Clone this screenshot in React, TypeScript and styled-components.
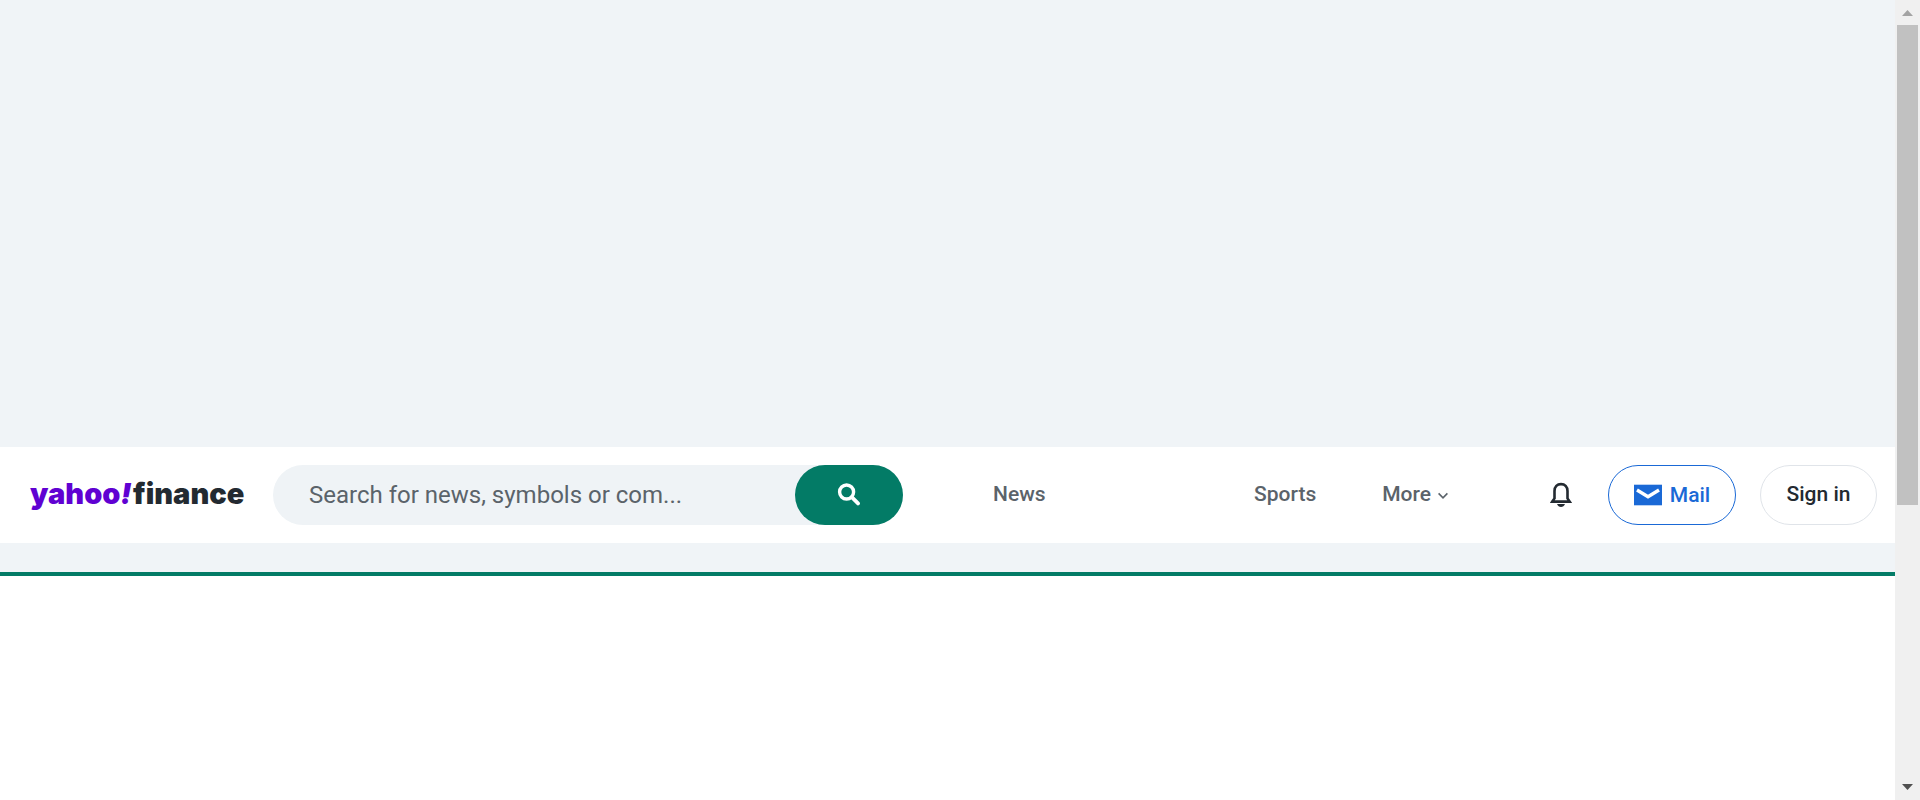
import React from 'react';
import styled, { createGlobalStyle } from 'styled-components';

const GlobalStyle = createGlobalStyle`
  *, *::before, *::after { box-sizing: border-box; }
  body {
    margin: 0;
    background: #fff;
    color: #232a31;
    font-family: Roboto, "Liberation Sans", sans-serif;
  }
`;

const Shell = styled.div`
  display: flex;
  height: 100vh;
`;

const Page = styled.div`
  flex: 1;
  min-width: 0;
  overflow: hidden;
`;

const AdBanner = styled.aside`
  height: 447px;
  background: #f0f4f7;
`;

const Header = styled.header`
  display: flex;
  align-items: center;
  height: 96px;
  padding: 0 18px 0 30px;
  background: #fff;
`;

const Logo = styled.a`
  display: flex;
  flex: 0 0 243px;
  padding-bottom: 2px;
  font: 900 29px/40px Inter, "Noto Sans", sans-serif;
  color: #232a31;
  text-decoration: none;
`;

const LogoBrand = styled.span`
  flex: 0 0 103px;
  color: #6001d2;
`;

const SearchForm = styled.form`
  display: flex;
  flex: 0 1 630px;
  height: 60px;
  border-radius: 30px;
  background: #eff3f6;
`;

const SearchInput = styled.input`
  flex: 1;
  min-width: 0;
  padding: 0 0 0 36px;
  border: 0;
  outline: 0;
  background: transparent;
  font: 400 24px/30px Roboto, sans-serif;
  color: #232a31;

  &::placeholder {
    color: #5b636a;
    opacity: 1;
  }
`;

const SearchButton = styled.button`
  display: flex;
  align-items: center;
  justify-content: center;
  flex: 0 0 108px;
  padding: 0 0 2px;
  border: 0;
  border-radius: 30px;
  background: #037b66;
`;

const Nav = styled.nav`
  display: flex;
  flex: 1;
  align-items: center;
  justify-content: space-between;
  margin: 0 102px 0 90px;
  padding-bottom: 2px;
`;

const NavGroup = styled.div`
  display: flex;
  align-items: center;
  gap: 66px;
`;

const NavLink = styled.a`
  font: 500 21px/30px Roboto, sans-serif;
  color: #5b636a;
  text-decoration: none;
`;

const MoreButton = styled.button`
  display: flex;
  align-items: center;
  gap: 7px;
  padding: 0;
  border: 0;
  background: none;
  font: 500 21px/30px Roboto, sans-serif;
  color: #5b636a;
`;

const BellButton = styled.button`
  display: flex;
  margin-right: 36px;
  padding: 0;
  border: 0;
  background: none;
`;

const PillLink = styled.a<{ $tone: string; $border: string; $width: number }>`
  display: flex;
  align-items: center;
  justify-content: center;
  gap: 8px;
  flex: 0 0 ${(p) => p.$width}px;
  height: 60px;
  border: 1px solid ${(p) => p.$border};
  border-radius: 30px;
  font: 500 21px/30px Roboto, sans-serif;
  color: ${(p) => p.$tone};
  text-decoration: none;

  & + & {
    margin-left: 24px;
    padding-bottom: 2px;
  }
`;

const SubBar = styled.div`
  height: 33px;
  border-bottom: 4px solid #037b66;
  background: #f0f4f7;
`;

const Scrollbar = styled.div`
  display: flex;
  flex: 0 0 25px;
  flex-direction: column;
  align-items: center;
  background: #f0f0f0;
`;

const ScrollArrow = styled.svg`
  flex: 0 0 25px;
  width: 25px;
  height: 25px;
`;

const ScrollTrack = styled.div`
  flex: 1;
  width: 21px;
`;

const ScrollThumb = styled.div`
  height: 64%;
  background: #c1c1c1;
`;

export default function App() {
  return (
    <>
      <GlobalStyle />
      <Shell>
        <Page>
          <AdBanner />
          <Header>
            <Logo href="#">
              <LogoBrand>
                yahoo<i>!</i>
              </LogoBrand>
              finance
            </Logo>
            <SearchForm role="search">
              <SearchInput
                type="text"
                aria-label="Search"
                placeholder="Search for news, symbols or com..."
              />
              <SearchButton type="button" aria-label="Search">
                <svg width="24" height="24" viewBox="0 0 24 24" fill="none" stroke="#fff">
                  <circle cx="9.6" cy="10" r="7" strokeWidth="3.4" />
                  <path d="M14.8 15.2L21 21.4" strokeWidth="3.8" strokeLinecap="round" />
                </svg>
              </SearchButton>
            </SearchForm>
            <Nav>
              <NavLink href="#">News</NavLink>
              <NavGroup>
                <NavLink href="#">Sports</NavLink>
                <MoreButton type="button">
                  More
                  <svg width="10" height="12" viewBox="0 0 10 12" fill="none" stroke="#5b636a">
                    <path d="M.6 5.4L5 9.8L9.4 5.4" strokeWidth="1.6" />
                  </svg>
                </MoreButton>
              </NavGroup>
            </Nav>
            <BellButton type="button" aria-label="Notifications">
              <svg width="22" height="26" viewBox="0 0 22 26">
                <path
                  d="M2.3 19.6L4.5 16.4V9C4.5 4.6 7.2 2.1 11 2.1S17.5 4.6 17.5 9V16.4L19.7 19.6Z"
                  fill="none"
                  stroke="#232a31"
                  strokeWidth="2.6"
                />
                <path d="M7 22H15C14.2 24.1 12.8 25 11 25S7.8 24.1 7 22Z" fill="#232a31" />
              </svg>
            </BellButton>
            <PillLink href="#" $tone="#1a69d6" $border="#1a69d6" $width={128}>
              <svg width="28" height="22" viewBox="0 0 28 22">
                <path d="M0 .7H28V21.3H0Z" fill="#1a69d6" />
                <path d="M3 6L14 12.8L25 6" fill="none" stroke="#fff" strokeWidth="3.4" />
              </svg>
              Mail
            </PillLink>
            <PillLink href="#" $tone="#232a31" $border="#e0e4e9" $width={117}>
              Sign in
            </PillLink>
          </Header>
          <SubBar />
        </Page>
        <Scrollbar aria-hidden="true">
          <ScrollArrow viewBox="0 0 25 25">
            <path d="M7 16L12.5 10L18 16Z" fill="#a3a3a3" />
          </ScrollArrow>
          <ScrollTrack>
            <ScrollThumb />
          </ScrollTrack>
          <ScrollArrow viewBox="0 0 25 25">
            <path d="M7 9L12.5 15L18 9Z" fill="#505050" />
          </ScrollArrow>
        </Scrollbar>
      </Shell>
    </>
  );
}
